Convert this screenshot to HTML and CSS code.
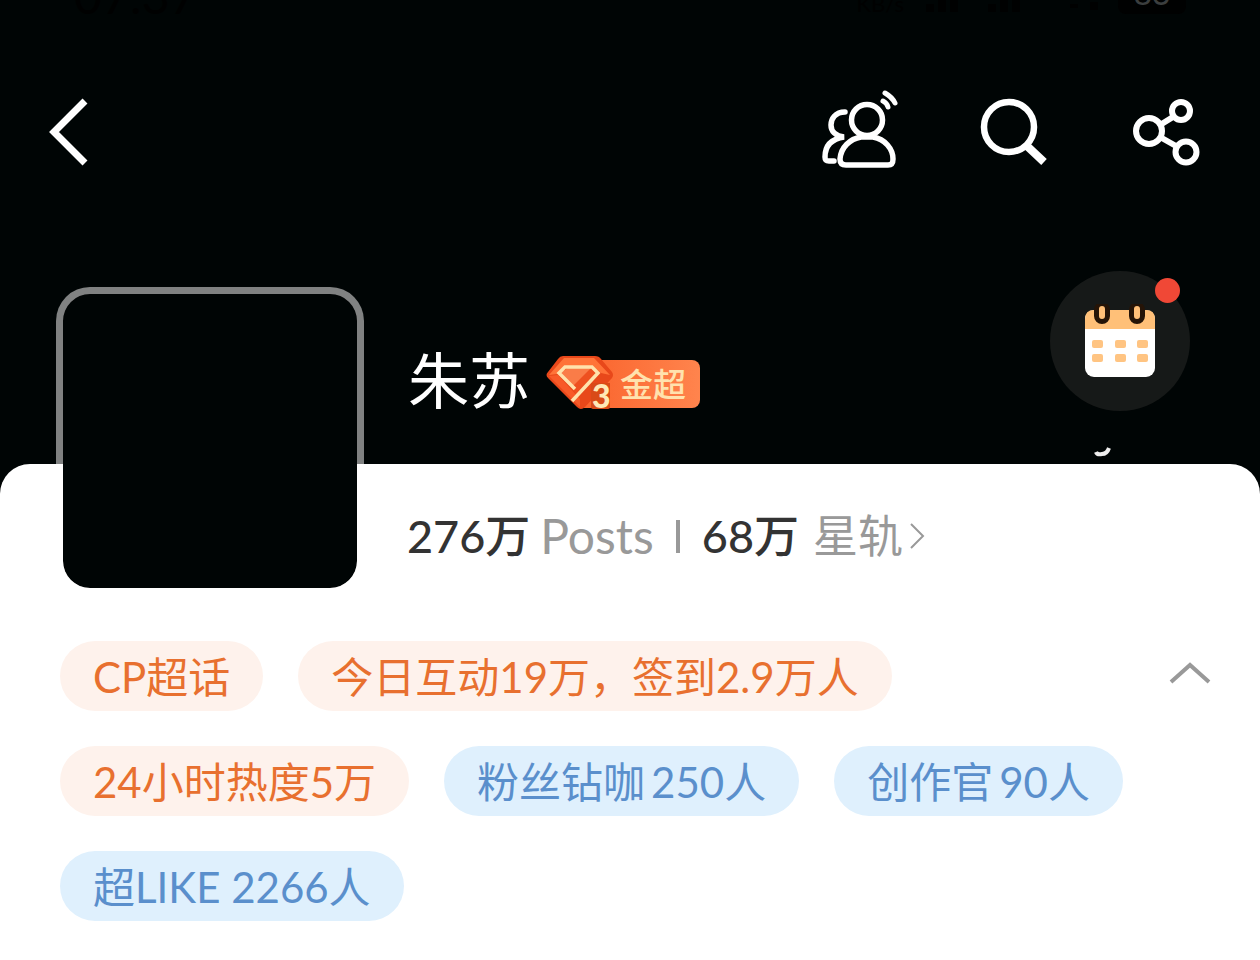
FILE: index.html
```html
<!DOCTYPE html>
<html lang="zh-CN">
<head>
<meta charset="utf-8">
<meta name="viewport" content="width=device-width, initial-scale=1">
<title>朱苏</title>
<link rel="stylesheet" href="styles.css">
</head>
<body>
<header class="hero">
  <div class="status">
    <span class="status-time">07:37</span>
    <span class="status-net">KB/s</span>
    <svg class="status-signal" viewBox="0 0 180 14" aria-hidden="true"><path d="M2 4h8v8H2zM14 0h8v12h-8zM26 0h8v12h-8zM64 4h8v8h-8zM76 0h8v12h-8zM88 0h8v12h-8zM146 4h8v4h-8zM166 2h8v8h-8z"/></svg>
    <span class="status-battery">83</span>
  </div>
  <nav class="nav">
    <button class="icon-button" aria-label="返回">
      <svg width="40" height="68" viewBox="0 0 40 68"><path d="M37 3 6 34l31 31" fill="none" stroke="#fff" stroke-width="7"/></svg>
    </button>
    <div class="nav-actions">
      <button class="icon-button" aria-label="成员">
        <svg width="76" height="80" viewBox="0 0 76 80" fill="none" stroke="#fff" stroke-width="5.500" stroke-linecap="round">
          <circle cx="45" cy="28" r="15.500"/>
          <path d="M39 45h12c12 2 20 12 20 22 0 4-1 6-5 6H24c-4 0-6-2-6-6 1-12 10-20 21-22z"/>
          <path d="M23 20C13 20 9 27 9 33c0 6 4 11 13 12C9 47 3 54 3 65c0 3 1 4 4 4h5"/>
          <path d="M61 9q4 2 5 6M63 1q7 4 10 10" stroke-width="5"/>
        </svg>
      </button>
      <button class="icon-button" aria-label="搜索">
        <svg width="70" height="70" viewBox="0 0 70 70" fill="none" stroke="#fff" stroke-width="6.500"><circle cx="29" cy="30" r="25"/><path d="m47 49 17 16" stroke-width="8"/></svg>
      </button>
      <button class="icon-button" aria-label="分享">
        <svg width="68" height="68" viewBox="0 0 68 68" fill="none" stroke="#fff" stroke-width="6"><circle cx="17" cy="33" r="13"/><circle cx="49" cy="13" r="9"/><circle cx="54" cy="54" r="10.500"/><path d="m28 27 13-8M28 39l16 9"/></svg>
      </button>
    </div>
  </nav>
  <div class="profile">
    <div class="avatar" role="img" aria-label="头像"></div>
    <div class="title">
      <h1 class="name">朱苏</h1>
      <div class="badge">
        <svg class="badge-gem" viewBox="0 0 68 56" aria-hidden="true">
          <path d="M17 1h32q4 0 6 3l11 13q2 3 0 6L39 52q-4 4-8 0L2 23q-3-3 0-6L12 4q2-3 5-3z" fill="#e8481a"/>
          <path d="M18 3h30l16 17-9-2-8-7H20l-9 8-8 1z" fill="#ff7338"/>
          <path d="M3 21l9-1 22 24v8z" fill="#f85a28"/>
          <path d="M20 12h26l7 7-21 22L13 18z" fill="#ee5020"/>
          <path d="M22 13h23L27 31 14 18z" fill="#fa7c48"/>
          <path d="m29 34-16-16 6-6h27l6 6-26 28" fill="none" stroke="#ffe2ac" stroke-width="3.500"/>
          <path d="M45 28h19v24q0 2-2 2H47q-2 0-2-2z" fill="#d94a18"/>
        </svg>
        <span class="badge-level">3</span>
        <span class="badge-text">金超</span>
      </div>
    </div>
    <div class="checkin">
      <button class="checkin-button" aria-label="签到">
        <svg width="72" height="74" viewBox="0 0 72 74">
          <rect x="1" y="6" width="70" height="67" rx="9" fill="#fff"/>
          <path d="M1 25V15q0-9 9-9h52q9 0 9 9v10z" fill="#ffc078"/>
          <path d="M18 6v6M53 6v6" stroke="#251407" stroke-width="16" stroke-linecap="round"/>
          <path d="M18 5v7M53 5v7" stroke="#ffc078" stroke-width="6" stroke-linecap="round"/>
          <g fill="#ffc482"><rect x="8" y="36" width="11" height="8" rx="2"/><rect x="31" y="36" width="11" height="8" rx="2"/><rect x="53" y="36" width="11" height="8" rx="2"/><rect x="8" y="50" width="11" height="8" rx="2"/><rect x="31" y="50" width="11" height="8" rx="2"/><rect x="53" y="50" width="11" height="8" rx="2"/></g>
        </svg>
        <span class="dot"></span>
      </button>
      <svg class="checkin-mark" width="22" height="14" viewBox="0 0 22 14" aria-hidden="true"><path d="M3 8q1 3 6 2 5 0 7-6" fill="none" stroke="#eee" stroke-width="4"/></svg>
    </div>
  </div>
</header>
<main class="sheet">
  <a class="stats" href="#posts"><strong>276万</strong><span>Posts</span><i class="divider"></i><strong>68万</strong><span class="track">星轨</span><svg width="16" height="28" viewBox="0 0 16 28" aria-hidden="true"><path d="m2 2 12 12L2 26" fill="none" stroke="#999" stroke-width="2"/></svg></a>
  <section class="tags">
    <ul class="tag-list">
      <li class="tag">CP超话</li>
      <li class="tag">今日互动19万，签到2.9万人</li>
      <li class="tag">24小时热度5万</li>
      <li class="tag tag-blue">粉丝钻咖<span class="count">250人</span></li>
      <li class="tag tag-blue">创作官<span class="count">90人</span></li>
      <li class="tag tag-blue">超LIKE 2266人</li>
    </ul>
    <button class="icon-button collapse" aria-label="收起">
      <svg width="40" height="22" viewBox="0 0 40 22"><path d="M1 20 20 3l19 17" fill="none" stroke="#999" stroke-width="4"/></svg>
    </button>
  </section>
</main>
</body>
</html>
```
FILE: styles.css
```css
* { box-sizing: border-box; }
body {
  margin: 0;
  background: #000505;
  font-family: Lato, "Noto Sans CJK SC", sans-serif;
  min-height: 100vh;
  display: flex;
  flex-direction: column;
}
.icon-button {
  border: 0;
  padding: 0;
  background: none;
  display: flex;
}
.icon-button svg { display: block; overflow: visible; }

.status {
  height: 14px;
  overflow: hidden;
  display: flex;
  align-items: flex-end;
  padding: 0 74px;
  color: #000101;
  font-size: 48px;
  line-height: 36px;
}
.status-net { margin-left: auto; font-size: 22px; line-height: 20px; }
.status-signal { width: 180px; height: 14px; margin: 0 14px 0 20px; fill: #000101; }
.status-battery {
  width: 68px;
  padding-bottom: 8px;
  text-align: center;
  border-radius: 0 0 8px 8px;
  background: #000101;
  color: #3b3e3e;
  font-size: 32px;
  line-height: 26px;
}
.nav {
  height: 236px;
  padding: 0 60px 0 48px;
  display: flex;
  justify-content: space-between;
  align-items: center;
}
.nav-actions {
  display: flex;
  align-items: center;
  gap: 82px;
}
.profile {
  height: 214px;
  padding: 0 70px 0 56px;
  display: flex;
  align-items: flex-start;
}
.avatar {
  position: relative;
  z-index: 1;
  flex: none;
  width: 308px;
  height: 308px;
  margin-top: 37px;
  border: 7px solid rgba(255, 255, 255, .5);
  border-radius: 34px;
  background: #000505;
  background-clip: padding-box;
}
.title {
  display: flex;
  align-items: center;
  gap: 16px;
  margin: 85px auto 0 44px;
}
.name {
  margin: 0;
  color: #fff;
  font-size: 61px;
  font-weight: 400;
  line-height: 92px;
}
.badge {
  position: relative;
  display: flex;
  align-items: center;
  height: 48px;
  margin-top: 6px;
  padding: 0 14px 0 74px;
  border-radius: 8px;
  background: linear-gradient(90deg, transparent 38px, #fa642d 38px, #ff844d);
}
.badge-gem {
  position: absolute;
  left: 0;
  top: -5px;
  width: 68px;
  height: 56px;
}
.badge-level {
  position: absolute;
  left: 46px;
  top: 22px;
  color: #ffe8b6;
  font-size: 32px;
  font-weight: 900;
  line-height: 28px;
}
.badge-text {
  color: #ffe2ae;
  font-size: 33px;
  font-weight: 500;
  line-height: 48px;
}
.checkin {
  display: flex;
  flex-direction: column;
  align-items: center;
  margin-top: 21px;
}
.checkin-button {
  position: relative;
  display: flex;
  align-items: center;
  justify-content: center;
  width: 140px;
  height: 140px;
  padding: 0;
  border: 0;
  border-radius: 50%;
  background: #161918;
}
.dot {
  position: absolute;
  top: 7px;
  right: 10px;
  width: 25px;
  height: 25px;
  border-radius: 50%;
  background: #f04836;
}
.checkin-mark { margin: 33px 32px 0 0; }

.sheet {
  flex: 1;
  padding: 36px 50px 40px 60px;
  border-radius: 30px 30px 0 0;
  background: #fff;
}
.stats {
  display: flex;
  align-items: center;
  width: fit-content;
  margin-left: 347px;
  color: #999;
  font-size: 48px;
  line-height: 72px;
  text-decoration: none;
}
.stats strong {
  color: #333;
  font-size: 45px;
  font-weight: 500;
}
.stats span { margin-left: 10px; }
.stats .track {
  margin-left: 14px;
  margin-right: 6px;
  font-size: 45px;
}
.divider {
  width: 4px;
  height: 33px;
  margin: 0 22px;
  background: #999;
}
.tags {
  display: flex;
  align-items: flex-start;
  gap: 20px;
  margin-top: 69px;
}
.tag-list {
  flex: 1;
  display: flex;
  flex-wrap: wrap;
  gap: 35px;
  margin: 0;
  padding: 0;
  list-style: none;
}
.tag {
  padding: 2px 33px 0;
  border-radius: 35px;
  background: #fef2ec;
  color: #e8702f;
  font-size: 42px;
  line-height: 68px;
}
.tag-blue {
  background: #dff0fd;
  color: #5a8fcc;
}
.count { margin-left: 6px; }
.collapse { margin-top: 21px; }
```
